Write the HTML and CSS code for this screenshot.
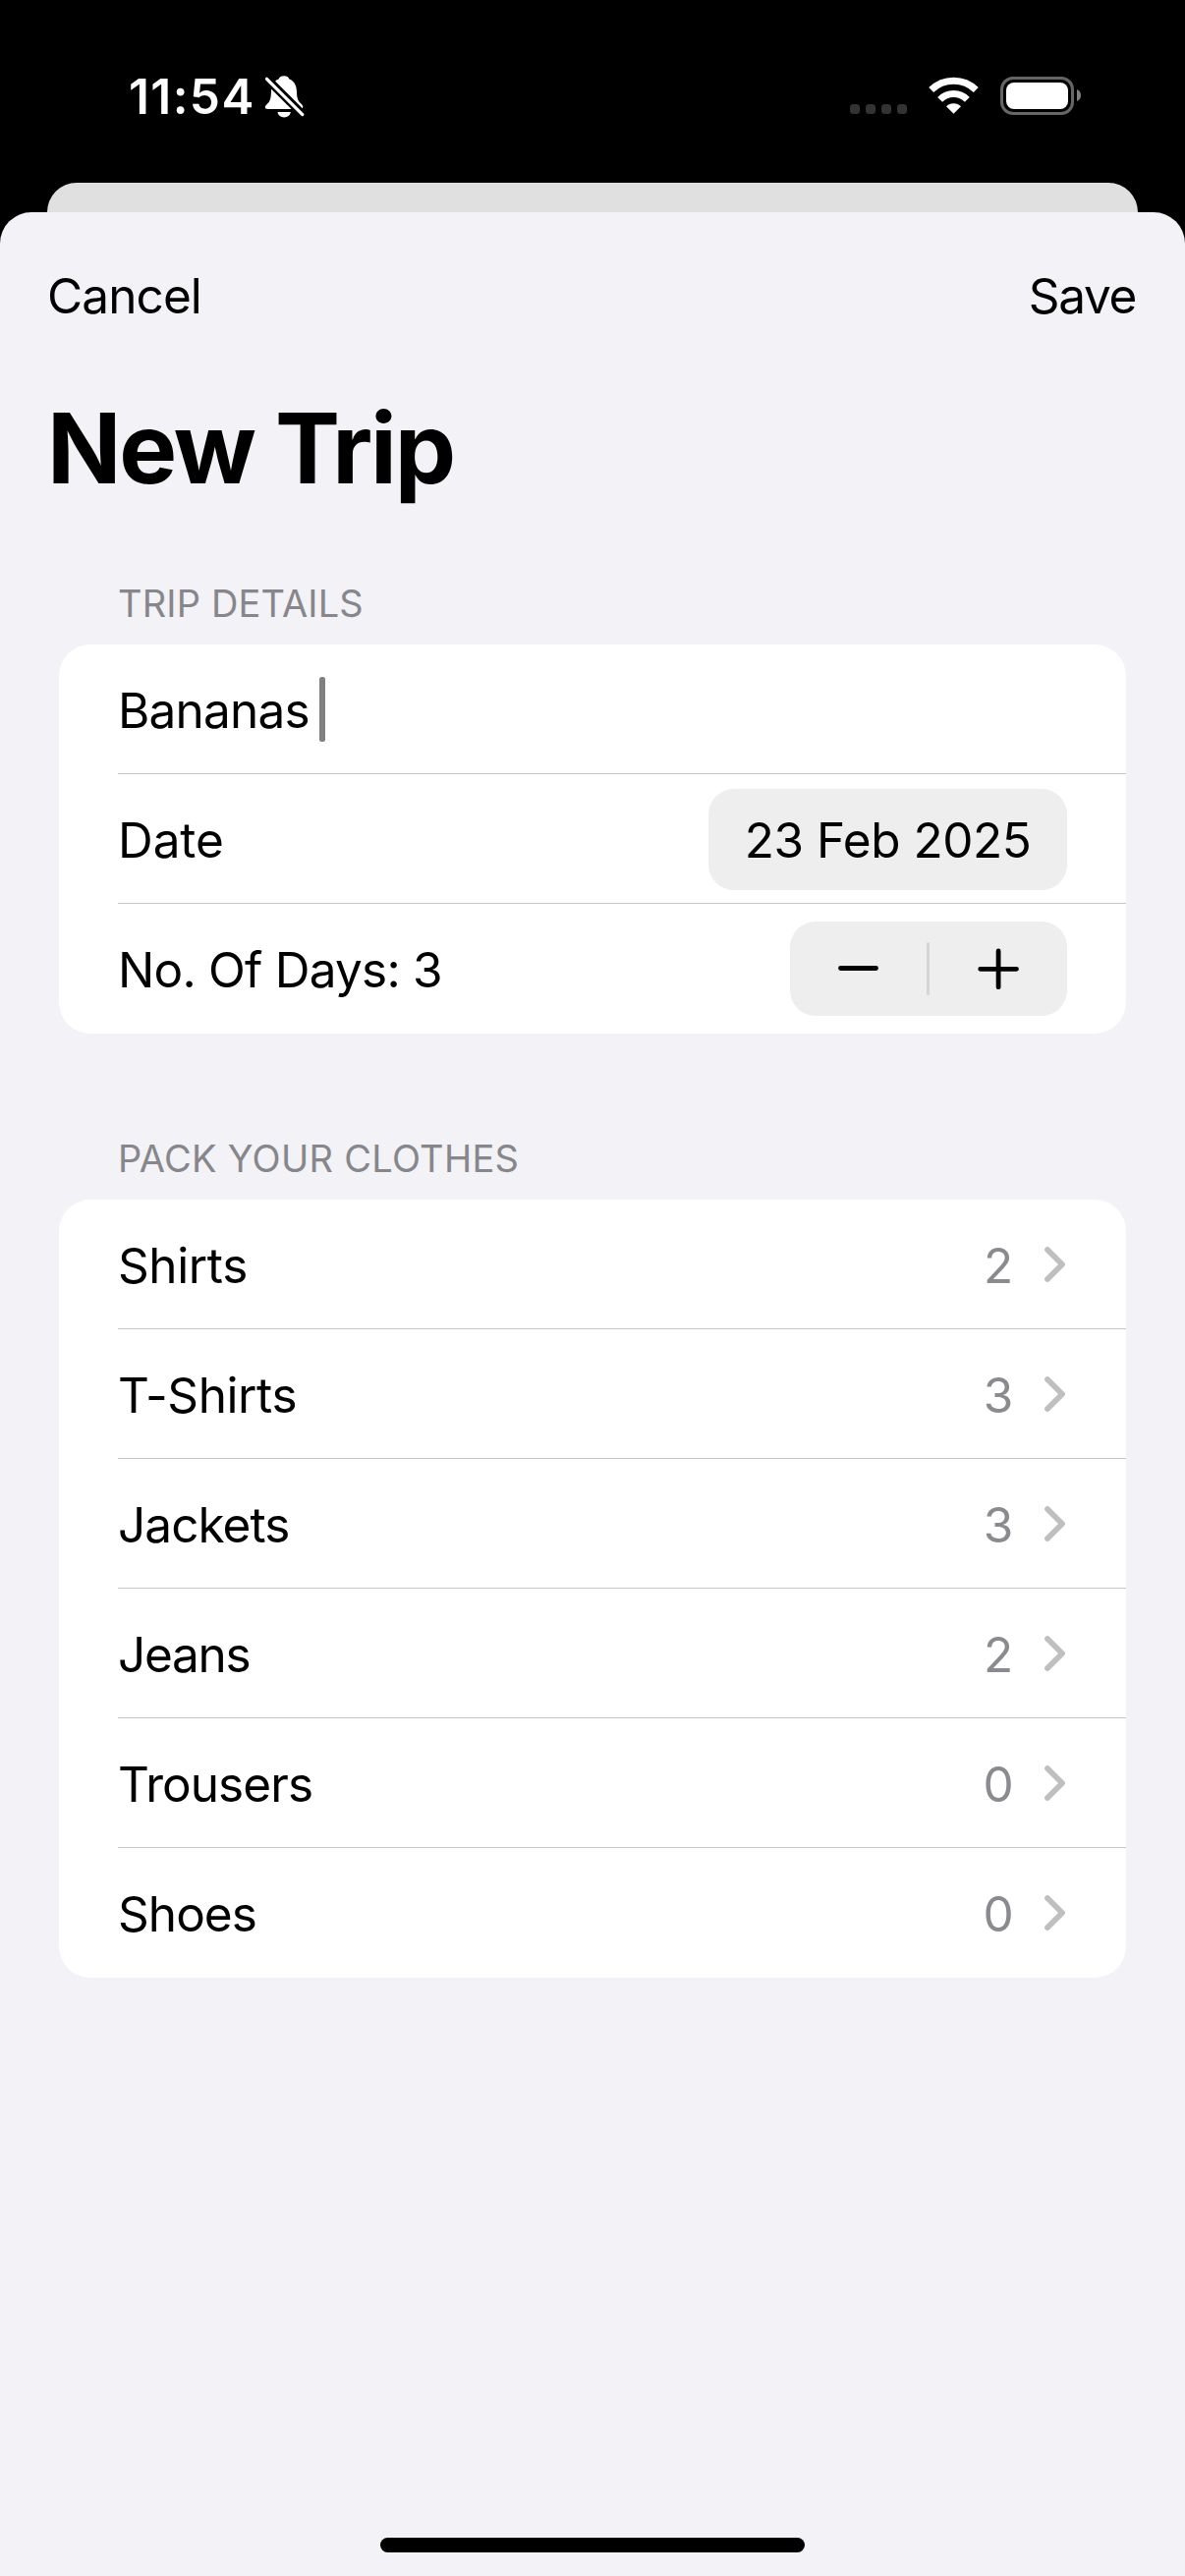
FILE: index.html
```html
<!DOCTYPE html>
<html lang="en">
<head>
<meta charset="utf-8">
<title>New Trip</title>
<link rel="stylesheet" href="styles.css">
</head>
<body>
<svg class="defs" width="0" height="0" aria-hidden="true">
  <symbol id="chevron" viewBox="0 0 24 38"><path d="M4 4l15 15L4 34" fill="none" stroke="currentColor" stroke-width="5.8" stroke-linecap="round" stroke-linejoin="round"/></symbol>
</svg>
<header class="status">
  <div class="status-left">
    <span class="time">11:54</span>
    <svg class="bell" width="41" height="44" viewBox="0 0 41 44">
      <path d="M20 1.200c-2.600 0-4.600 1.200-5.400 3.200C9.500 6.200 7.300 11 7 17c-.3 7.500-1 10-4.500 13.300C-.3 33 .8 34.900 3.300 34.900h33.500c2.500 0 3.400-2.400 1.500-4.400C34 26.500 33.200 24.500 33 17c-.2-6-2.600-10.800-7.600-12.600-.8-2-2.800-3.200-5.400-3.200z" fill="#fff"/>
      <path d="M13.500 38h13.300c-.5 3.400-3.200 5.400-6.600 5.400s-6.200-2-6.700-5.400z" fill="#fff"/>
      <path d="M1 2.500l39 39" stroke="#000" stroke-width="8.400"/>
      <path d="M2.500 4.300l36.300 36.300" stroke="#fff" stroke-width="3.200" stroke-linecap="round"/>
    </svg>
  </div>
  <div class="status-right">
    <svg class="dots" width="58" height="40" viewBox="0 0 58 40" fill="#333"><rect y="29" width="10" height="10" rx="3.500"/><rect x="16" y="29" width="10" height="10" rx="3.500"/><rect x="32" y="29" width="10" height="10" rx="3.500"/><rect x="48" y="29" width="10" height="10" rx="3.500"/></svg>
    <svg class="wifi" width="52" height="40" viewBox="0 -1 52 40" fill="none" stroke="#fff">
      <path d="M2.700 13.600a32.500 32.500 0 0 1 45.600 0" stroke-width="7"/>
      <path d="M11.650 23.350a19.300 19.300 0 0 1 27.700 0" stroke-width="6.800"/>
      <path d="M25.500 37.800L18 30.300a10.600 10.600 0 0 1 15 0z" fill="#fff" stroke="none"/>
    </svg>
    <svg class="battery" width="83" height="40" viewBox="0 0 83 40"><rect x="2.500" y="2.500" width="72" height="36" rx="11.500" fill="none" stroke="#666" stroke-width="3"/><rect x="7" y="7" width="63" height="27" rx="8" fill="#fff"/><path d="M79 14c2.700 1 4 3.300 4 6s-1.300 5-4 6z" fill="#808080"/></svg>
  </div>
</header>
<div class="back-sheet"></div>
<main class="sheet">
  <nav class="nav">
    <span class="cancel">Cancel</span>
    <span class="save">Save</span>
  </nav>
  <h1 class="title">New Trip</h1>

  <h2 class="heading">TRIP DETAILS</h2>
  <section class="card">
    <div class="row"><span class="label">Bananas</span><span class="caret"></span></div>
    <div class="row"><span class="label even">Date</span><span class="date">23 Feb 2025</span></div>
    <div class="row">
      <span class="label">No. Of Days: 3</span>
      <div class="stepper">
        <span class="step"><svg width="42" height="42" viewBox="0 0 42 42"><path d="M2.500 20.500h36"/></svg></span>
        <span class="divider"></span>
        <span class="step"><svg width="42" height="42" viewBox="0 0 42 42"><path d="M2.700 21.300h36.800M21.100 2.900v36.800"/></svg></span>
      </div>
    </div>
  </section>

  <h2 class="heading clothes">PACK YOUR CLOTHES</h2>
  <section class="card">
    <div class="row"><span class="label loose">Shirts</span><span class="count">2</span><svg class="chevron"><use href="#chevron"/></svg></div>
    <div class="row"><span class="label loose">T-Shirts</span><span class="count">3</span><svg class="chevron"><use href="#chevron"/></svg></div>
    <div class="row"><span class="label snug">Jackets</span><span class="count">3</span><svg class="chevron"><use href="#chevron"/></svg></div>
    <div class="row"><span class="label tight">Jeans</span><span class="count">2</span><svg class="chevron"><use href="#chevron"/></svg></div>
    <div class="row"><span class="label snug">Trousers</span><span class="count">0</span><svg class="chevron"><use href="#chevron"/></svg></div>
    <div class="row"><span class="label snug">Shoes</span><span class="count">0</span><svg class="chevron"><use href="#chevron"/></svg></div>
  </section>
  <div class="home-indicator"></div>
</main>
</body>
</html>
```
FILE: styles.css
```css
* { box-sizing: border-box; }
body {
  margin: 0;
  width: 1206px;
  height: 2622px;
  display: flex;
  flex-direction: column;
  background: #000;
  color: #000;
  font: 400 49.5px/60px Inter, "Liberation Sans", sans-serif;
  white-space: nowrap;
}
svg { display: block; flex: none; }
.defs { position: absolute; }

.status {
  height: 186px;
  padding: 68px 106px 58px 131px;
  display: flex;
  justify-content: space-between;
  align-items: center;
  color: #fff;
}
.status-left { display: flex; align-items: center; gap: 9px; }
.time { font-weight: 600; letter-spacing: 1.4px; }
.status-right { display: flex; align-items: center; margin-bottom: 2px; }
.wifi { margin: 0 20px 0 22px; }

.back-sheet {
  height: 30px;
  margin: 0 48px;
  background: #e0e0e0;
  border-radius: 30px 30px 0 0;
}
.sheet {
  flex: 1;
  display: flex;
  flex-direction: column;
  padding: 55px 60px 24px;
  background: #f2f2f7;
  border-radius: 32px 32px 0 0;
}
.nav {
  margin: 0 -10px 0 -12px;
  display: flex;
  justify-content: space-between;
}
.cancel { letter-spacing: -0.9px; }
.save { letter-spacing: -1.35px; }
.title {
  margin: 65px 0 0 -12px;
  font-size: 99px;
  font-weight: 700;
  line-height: 120px;
  letter-spacing: -2.2px;
}
.heading {
  margin: 75px 0 19px 60px;
  font-size: 38px;
  font-weight: 400;
  line-height: 46px;
  letter-spacing: 0.15px;
  color: #87868b;
}
.clothes { margin-top: 104px; letter-spacing: 0.28px; }

.card {
  background: #fff;
  border-radius: 32px;
  padding-left: 60px;
  overflow: hidden;
}
.row {
  height: 132px;
  padding-right: 60px;
  display: flex;
  align-items: center;
  box-shadow: inset 0 -1px #c6c6c8;
}
.row:last-child { box-shadow: none; }
.label { padding-top: 2px; letter-spacing: -0.78px; }
.even { letter-spacing: -0.08px; }
.loose { letter-spacing: -0.4px; }
.snug { letter-spacing: -0.95px; }
.tight { letter-spacing: -1.3px; }
.caret {
  width: 5.5px;
  height: 66px;
  margin-left: 10.5px;
  border-radius: 2.5px;
  background: #808080;
}
.date {
  width: 365px;
  height: 103px;
  margin: 1px 0 0 auto;
  border-radius: 26px;
  background: #eee;
  text-align: center;
  line-height: 104px;
  letter-spacing: -0.46px;
}
.stepper {
  width: 282px;
  height: 96px;
  margin-left: auto;
  display: flex;
  align-items: center;
  border-radius: 26px;
  background: #eee;
}
.step { width: 139px; display: flex; justify-content: center; }
.step:last-child { width: 140px; }
.step path { fill: none; stroke: #000; stroke-width: 4.8px; stroke-linecap: round; }
.divider { width: 3px; height: 54px; border-radius: 1.5px; background: #d5d5d5; }
.count {
  width: 32px;
  margin: 0 30px 0 auto;
  padding-top: 2px;
  text-align: center;
  color: #8b8a8f;
}
.chevron { width: 24px; height: 38px; color: #bfbfbf; }

.home-indicator {
  width: 432px;
  height: 15px;
  margin: auto auto 0;
  border-radius: 7.5px;
  background: #000;
}
```
